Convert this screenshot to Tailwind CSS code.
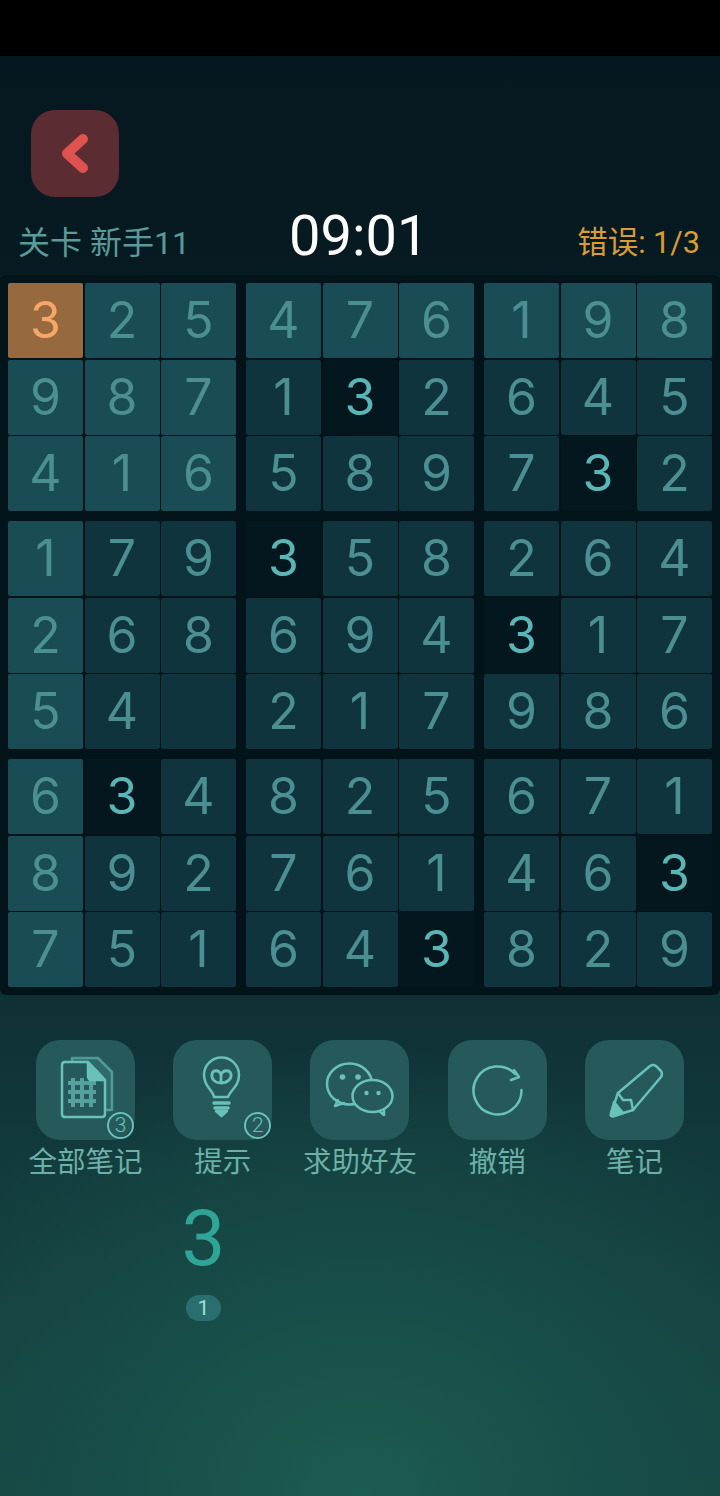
<!DOCTYPE html>
<html lang="zh">
<head>
<meta charset="utf-8">
<script src="https://cdn.jsdelivr.net/npm/@tailwindcss/browser@4"></script>
</head>
<body class="bg-black">
<div class="w-[720px] h-[1496px] overflow-hidden flex flex-col font-['Roboto','Noto_Sans_CJK_SC',sans-serif] bg-[radial-gradient(ellipse_75%_30%_at_50%_100%,#1d5c50_0%,#174c48_50%,transparent_100%),linear-gradient(180deg,#05161e_0%,#071b23_20%,#0d2a31_60%,#123a3c_78%,#174640_100%)]">
  <div class="h-14 bg-black shrink-0"></div>

  <div class="pt-[54px] pl-[31px]">
    <button class="block w-[88px] h-[87px] rounded-[24px] bg-[#5c2c33]">
      <svg viewBox="0 0 88 87" class="w-full h-full block"><path d="M52 29 L36 43.5 L52 58" fill="none" stroke="#de5350" stroke-width="10" stroke-linecap="round" stroke-linejoin="round"/></svg>
    </button>
  </div>

  <div class="h-[78px] relative flex items-end justify-between pl-[18px] pr-[20px] pb-[14px]">
    <div class="text-[32px] leading-[36px] text-[#5a9a9a]">关卡 新手11</div>
    <div class="absolute left-[289px] top-[9px] text-[56px] leading-[60px] text-white">09:01</div>
    <div class="text-[30.5px] leading-[36px] text-[#dc9c32]">错误: 1/3</div>
  </div>

  <div class="w-[720px] h-[720px] bg-[#03131a] rounded-[6px] p-2 grid grid-cols-3 gap-[10px] font-['Inter',sans-serif] font-normal text-[50px] text-[#4c8f92]">
    <div class="grid grid-cols-3 grid-rows-3 gap-[1.5px] *:flex *:items-center *:justify-center *:rounded-[2px]">
      <div class="bg-[#966a3e] text-[#f6a66a]">3</div><div class="bg-[#1a4c56]">2</div><div class="bg-[#1a4c56]">5</div>
      <div class="bg-[#1a4c56]">9</div><div class="bg-[#1a4c56]">8</div><div class="bg-[#1a4c56]">7</div>
      <div class="bg-[#1a4c56]">4</div><div class="bg-[#1a4c56]">1</div><div class="bg-[#1a4c56]">6</div>
    </div>
    <div class="grid grid-cols-3 grid-rows-3 gap-[1.5px] *:flex *:items-center *:justify-center *:rounded-[2px]">
      <div class="bg-[#1a4c56]">4</div><div class="bg-[#1a4c56]">7</div><div class="bg-[#1a4c56]">6</div>
      <div class="bg-[#0f343d]">1</div><div class="bg-[#04171f] text-[#5ab5b5]">3</div><div class="bg-[#0f343d]">2</div>
      <div class="bg-[#0f343d]">5</div><div class="bg-[#0f343d]">8</div><div class="bg-[#0f343d]">9</div>
    </div>
    <div class="grid grid-cols-3 grid-rows-3 gap-[1.5px] *:flex *:items-center *:justify-center *:rounded-[2px]">
      <div class="bg-[#1a4c56]">1</div><div class="bg-[#1a4c56]">9</div><div class="bg-[#1a4c56]">8</div>
      <div class="bg-[#0f343d]">6</div><div class="bg-[#0f343d]">4</div><div class="bg-[#0f343d]">5</div>
      <div class="bg-[#0f343d]">7</div><div class="bg-[#04171f] text-[#5ab5b5]">3</div><div class="bg-[#0f343d]">2</div>
    </div>

    <div class="grid grid-cols-3 grid-rows-3 gap-[1.5px] *:flex *:items-center *:justify-center *:rounded-[2px]">
      <div class="bg-[#1a4c56]">1</div><div class="bg-[#0f343d]">7</div><div class="bg-[#0f343d]">9</div>
      <div class="bg-[#1a4c56]">2</div><div class="bg-[#0f343d]">6</div><div class="bg-[#0f343d]">8</div>
      <div class="bg-[#1a4c56]">5</div><div class="bg-[#0f343d]">4</div><div class="bg-[#0f343d]"></div>
    </div>
    <div class="grid grid-cols-3 grid-rows-3 gap-[1.5px] *:flex *:items-center *:justify-center *:rounded-[2px]">
      <div class="bg-[#04171f] text-[#5ab5b5]">3</div><div class="bg-[#0f343d]">5</div><div class="bg-[#0f343d]">8</div>
      <div class="bg-[#0f343d]">6</div><div class="bg-[#0f343d]">9</div><div class="bg-[#0f343d]">4</div>
      <div class="bg-[#0f343d]">2</div><div class="bg-[#0f343d]">1</div><div class="bg-[#0f343d]">7</div>
    </div>
    <div class="grid grid-cols-3 grid-rows-3 gap-[1.5px] *:flex *:items-center *:justify-center *:rounded-[2px]">
      <div class="bg-[#0f343d]">2</div><div class="bg-[#0f343d]">6</div><div class="bg-[#0f343d]">4</div>
      <div class="bg-[#04171f] text-[#5ab5b5]">3</div><div class="bg-[#0f343d]">1</div><div class="bg-[#0f343d]">7</div>
      <div class="bg-[#0f343d]">9</div><div class="bg-[#0f343d]">8</div><div class="bg-[#0f343d]">6</div>
    </div>

    <div class="grid grid-cols-3 grid-rows-3 gap-[1.5px] *:flex *:items-center *:justify-center *:rounded-[2px]">
      <div class="bg-[#1a4c56]">6</div><div class="bg-[#04171f] text-[#5ab5b5]">3</div><div class="bg-[#0f343d]">4</div>
      <div class="bg-[#1a4c56]">8</div><div class="bg-[#0f343d]">9</div><div class="bg-[#0f343d]">2</div>
      <div class="bg-[#1a4c56]">7</div><div class="bg-[#0f343d]">5</div><div class="bg-[#0f343d]">1</div>
    </div>
    <div class="grid grid-cols-3 grid-rows-3 gap-[1.5px] *:flex *:items-center *:justify-center *:rounded-[2px]">
      <div class="bg-[#0f343d]">8</div><div class="bg-[#0f343d]">2</div><div class="bg-[#0f343d]">5</div>
      <div class="bg-[#0f343d]">7</div><div class="bg-[#0f343d]">6</div><div class="bg-[#0f343d]">1</div>
      <div class="bg-[#0f343d]">6</div><div class="bg-[#0f343d]">4</div><div class="bg-[#04171f] text-[#5ab5b5]">3</div>
    </div>
    <div class="grid grid-cols-3 grid-rows-3 gap-[1.5px] *:flex *:items-center *:justify-center *:rounded-[2px]">
      <div class="bg-[#0f343d]">6</div><div class="bg-[#0f343d]">7</div><div class="bg-[#0f343d]">1</div>
      <div class="bg-[#0f343d]">4</div><div class="bg-[#0f343d]">6</div><div class="bg-[#04171f] text-[#5ab5b5]">3</div>
      <div class="bg-[#0f343d]">8</div><div class="bg-[#0f343d]">2</div><div class="bg-[#0f343d]">9</div>
    </div>
  </div>

  <div class="grid grid-cols-5 px-[17px] pt-[45px] text-[28.5px] leading-[34px] text-[#6cb0a8]">
    <div class="flex flex-col items-center gap-[6px]">
      <div class="relative w-[99px] h-[100px] rounded-[24px] bg-[#25595a]">
        <svg viewBox="0 0 99 100" class="w-full h-full block" fill="none" stroke="#69c1ba" stroke-width="2.500" stroke-linejoin="round" stroke-linecap="round">
          <path d="M36 21 V18 H62 L76 32 V70 H69" fill="#2f6a6a" stroke-opacity=".6"/>
          <path d="M26 25 Q26 22 29 22 H52 L69 40 V74 Q69 77 66 77 H29 Q26 77 26 74 Z" fill="#25595a"/>
          <path d="M52 22 L69 40 H56 Q52 40 52 36 Z" fill="#69c1ba"/>
          <path d="M37 38 V67 M46 38 V67 M55 38 V67 M32 43 H60 M32 52 H60 M32 61 H60" stroke-width="4" stroke-opacity=".7" stroke-linecap="butt"/>
        </svg>
        <div class="absolute left-[71px] top-[72px] w-[27px] h-[27px] rounded-full border-2 border-[#69c1ba] flex items-center justify-center text-[21px] leading-none text-[#69c1ba] font-light">3</div>
      </div>
      <div>全部笔记</div>
    </div>
    <div class="flex flex-col items-center gap-[6px]">
      <div class="relative w-[99px] h-[100px] rounded-[24px] bg-[#25595a]">
        <svg viewBox="0 0 99 100" class="w-full h-full block" fill="none" stroke="#69c1ba" stroke-width="2.500" stroke-linejoin="round" stroke-linecap="round">
          <path d="M41 57 C40 50 31 47 31 35 A17.500 17.500 0 1 1 66 35 C66 47 57 50 55 57 Z"/>
          <path d="M48 43 C42 43 38 39 39 34 C40 30 46 29 48 35 C50 29 57 30 58 34 C59 39 54 43 48 43 Z M48 35 V43" stroke-width="2.800"/>
          <path d="M41 63 H56 M42 68 H55" stroke-width="3.500"/>
          <path d="M43 71 H54 L48.500 76 Z" fill="#69c1ba"/>
        </svg>
        <div class="absolute left-[71px] top-[72px] w-[27px] h-[27px] rounded-full border-2 border-[#69c1ba] flex items-center justify-center text-[21px] leading-none text-[#69c1ba] font-light">2</div>
      </div>
      <div>提示</div>
    </div>
    <div class="flex flex-col items-center gap-[6px]">
      <div class="w-[99px] h-[100px] rounded-[24px] bg-[#25595a]">
        <svg viewBox="0 0 99 100" class="w-full h-full block" fill="none" stroke="#69c1ba" stroke-width="2.500" stroke-linejoin="round" stroke-linecap="round">
          <path d="M28 60 L25 66 L34 63"/>
          <ellipse cx="39.500" cy="44" rx="22.500" ry="20.500"/>
          <circle cx="32.500" cy="37" r="2.800" fill="#69c1ba" stroke="none"/>
          <circle cx="48" cy="37" r="2.800" fill="#69c1ba" stroke="none"/>
          <path d="M68 70 L74 75 L74 66"/>
          <ellipse cx="62.500" cy="56" rx="20" ry="16" fill="#25595a"/>
          <circle cx="56.500" cy="53" r="2.200" fill="#69c1ba" stroke="none"/>
          <circle cx="68.500" cy="53" r="2.200" fill="#69c1ba" stroke="none"/>
        </svg>
      </div>
      <div>求助好友</div>
    </div>
    <div class="flex flex-col items-center gap-[6px]">
      <div class="w-[99px] h-[100px] rounded-[24px] bg-[#25595a]">
        <svg viewBox="0 0 99 100" class="w-full h-full block" fill="none" stroke="#69c1ba" stroke-width="2.500" stroke-linejoin="round" stroke-linecap="round">
          <path d="M73.500 50 A24 24 0 1 1 67 34"/>
          <path d="M66 30 L71 37 L63 40"/>
        </svg>
      </div>
      <div>撤销</div>
    </div>
    <div class="flex flex-col items-center gap-[6px]">
      <div class="w-[99px] h-[100px] rounded-[24px] bg-[#25595a]">
        <svg viewBox="0 0 99 100" class="w-full h-full block" fill="none" stroke="#69c1ba" stroke-width="2.500" stroke-linejoin="round" stroke-linecap="round">
          <path d="M33 53 L65 26 Q68 24 71 26 L76 31 Q78 34 76 37 L48 70"/>
          <path d="M33 53 L26 73 Q25 77 29 76 L48 70"/>
          <path d="M33 53 L38 60 L46 60 L48 70"/>
          <path d="M29 62 L26 74 Q25 77 29 76 L38 73 Z" fill="#69c1ba"/>
        </svg>
      </div>
      <div>笔记</div>
    </div>
  </div>

  <div class="pl-[165px] w-[77px] box-content flex flex-col items-center mt-[9px]">
    <div class="text-[78px] leading-[100px] text-[#2fa597]">3</div>
    <div class="mt-[6px] w-[35px] h-[26px] rounded-full bg-[#2a6e70] flex items-center justify-center text-[21px] leading-none text-[#9be4d8]">1</div>
  </div>
</div>
</body>
</html>
